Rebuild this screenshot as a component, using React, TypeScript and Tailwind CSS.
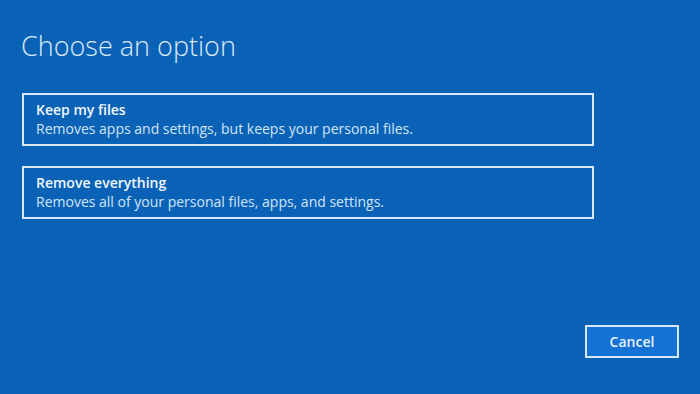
const options = [
  {
    title: "Keep my files",
    desc: "Removes apps and settings, but keeps your personal files.",
  },
  {
    title: "Remove everything",
    desc: "Removes all of your personal files, apps, and settings.",
  },
];

export default function App() {
  return (
    <div
      className="w-[700px] h-[394px] bg-[#0a62b6] flex flex-col overflow-hidden text-[#dce9f7]"
      style={{ fontFamily: '"Open Sans", "Noto Sans", sans-serif' }}
    >
      {/* Header */}
      <h1 className="pl-[21px] pt-[29px] text-[27px] font-light leading-[34px] text-[#dce9f7]">
        Choose an option
      </h1>

      {/* Options */}
      <div className="flex flex-col gap-[20px] pl-[22px] mt-[30px]">
        {options.map((opt) => (
          <button
            key={opt.title}
            className="w-[572px] h-[53px] border-2 border-[#d6e7f8] text-left pl-[12px] pt-[6px] flex flex-col"
          >
            <span className="text-[14px] font-semibold leading-[18px] text-[#f2f7fd]">
              {opt.title}
            </span>
            <span className="text-[14px] leading-[20px] text-[#d3e4f6]">
              {opt.desc}
            </span>
          </button>
        ))}
      </div>

      {/* Footer */}
      <div className="flex-1 flex items-end justify-end pr-[21px] pb-[36px]">
        <button className="w-[94px] h-[33px] border-2 border-[#d6e7f8] bg-[#1372d3] text-[14px] font-semibold text-[#e8f1fb]">
          Cancel
        </button>
      </div>
    </div>
  );
}
